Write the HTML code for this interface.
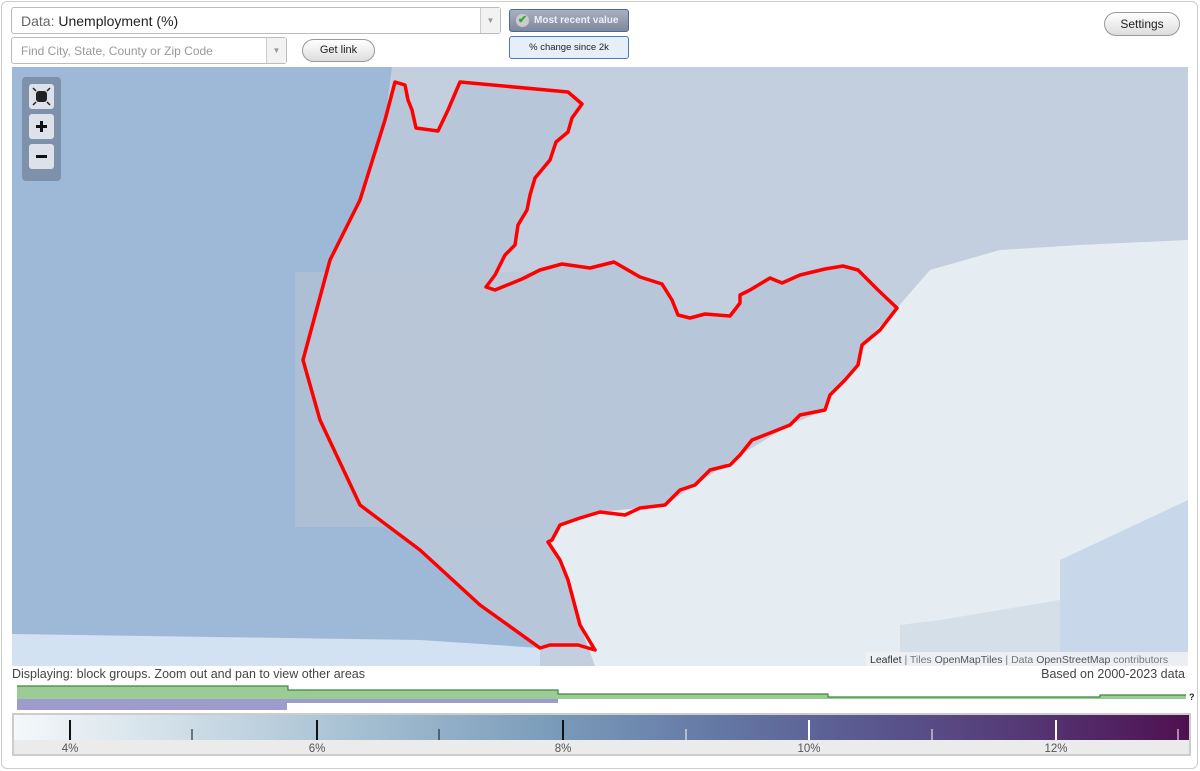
<!DOCTYPE html>
<html><head><meta charset="utf-8"><style>
*{box-sizing:border-box;margin:0;padding:0}
body{width:1200px;height:771px;background:#fff;font-family:"Liberation Sans",sans-serif;position:relative;overflow:hidden}
.frame{position:absolute;left:1px;top:1px;width:1197px;height:768px;border:1px solid #ccc;border-radius:6px}
.abs{position:absolute}
.sel{left:11px;top:7px;width:490px;height:27px;border:1px solid #bbb;border-radius:3px;background:#fff;font-size:14px;color:#666;padding:5px 9px}
.sel .dd,.find .dd{position:absolute;right:0;top:0;width:20px;height:100%;border-left:1px solid #ccc;background:#f2f2f2;color:#999;font-size:8px;text-align:center}
.find{left:11px;top:37px;width:276px;height:27px;border:1px solid #bbb;border-radius:3px;background:#fff;font-size:12px;color:#999;padding:6px 9px}
.btn{border:1px solid #999;border-radius:12px;background:linear-gradient(#fff,#ddd);font-size:11px;color:#222;text-align:center}
</style></head><body>
<div class="frame"></div>
<div class="abs sel">Data: <span style="color:#222">Unemployment (%)</span><div class="dd" style="line-height:26px">▼</div></div>
<div class="abs find">Find City, State, County or Zip Code<div class="dd" style="line-height:26px">▼</div></div>
<div class="abs btn" style="left:302px;top:39px;width:73px;height:23px;line-height:21px">Get link</div>
<div class="abs" style="left:509px;top:9px;width:120px;height:23px;border:1px solid #4a6a9a;border-radius:3px;background:linear-gradient(#a9b0bf,#7e889c);color:#eef;font-size:10px;font-weight:bold;line-height:21px;padding-left:24px">Most recent value
<span style="position:absolute;left:6px;top:4px;width:13px;height:13px;border-radius:7px;background:#ccc;color:#3a3;font-size:11px;line-height:13px;text-align:center">✔</span></div>
<div class="abs" style="left:509px;top:36px;width:120px;height:23px;border:1px solid #4a7ab8;border-radius:3px;background:#e6eef8;color:#222;font-size:9.5px;line-height:21px;text-align:center">% change since 2k</div>
<div class="abs btn" style="left:1104px;top:12px;width:76px;height:24px;line-height:22px;font-size:12px">Settings</div>

<svg class="abs" style="left:12px;top:67px" width="1176" height="599" viewBox="12 67 1176 599">
<rect x="12" y="67" width="1176" height="599" fill="#c3cedf"/>
<path d="M12 67 L392 67 L385 120 L360 200 L330 260 L303 360 L320 420 L360 505 L420 550 L480 605 L540 648 L540 666 L12 666Z" fill="#9eb9d7"/>
<path d="M12 634 L420 640 L540 648 L540 666 L12 666Z" fill="#d3e2f3"/>
<path d="M395 82 L405 85 L408 100 L412 110 L416 128 L438 131 L448 110 L460 82 L568 92 L582 104 L572 118 L568 132 L556 142 L550 160 L535 178 L530 195 L527 210 L518 225 L515 245 L505 255 L495 275 L486 287 L495 290 L522 279 L540 270 L562 264 L590 268 L614 262 L640 277 L662 284 L672 300 L678 315 L690 318 L705 314 L730 316 L740 303 L740 295 L750 290 L770 278 L782 283 L800 275 L825 269 L843 266 L858 270 L878 290 L897 308 L880 330 L862 345 L858 365 L845 380 L830 395 L825 410 L800 415 L790 425 L770 433 L752 440 L740 455 L730 465 L710 470 L695 485 L680 490 L665 505 L640 508 L625 515 L600 512 L580 518 L560 525 L552 540 L548 542 L560 560 L568 580 L580 625 L595 650 L578 645 L550 645 L540 648 L480 605 L420 550 L360 505 L320 420 L303 360 L330 260 L360 200 L385 120Z" fill="#b8c6da"/>
<rect x="295" y="272" width="255" height="255" fill="#bac5d3" opacity=".5"/>
<path d="M897 308 L930 270 L1000 250 L1080 245 L1188 240 L1188 666 L595 666 L580 625 L568 580 L560 560 L548 542 L552 540 L560 525 L600 512 L640 508 L665 505 L695 485 L740 455 L790 425 L825 410 L830 395 L858 365 L862 345Z" fill="#e6edf2"/>
<path d="M1060 560 L1188 500 L1188 666 L1060 666Z" fill="#c8d8ea"/>
<path d="M940 620 L1060 600 L1060 666 L900 666 L900 625Z" fill="#d5dfe8"/>
<path d="M395 82 L405 85 L408 100 L412 110 L416 128 L438 131 L448 110 L460 82 L568 92 L582 104 L572 118 L568 132 L556 142 L550 160 L535 178 L530 195 L527 210 L518 225 L515 245 L505 255 L495 275 L486 287 L495 290 L522 279 L540 270 L562 264 L590 268 L614 262 L640 277 L662 284 L672 300 L678 315 L690 318 L705 314 L730 316 L740 303 L740 295 L750 290 L770 278 L782 283 L800 275 L825 269 L843 266 L858 270 L878 290 L897 308 L880 330 L862 345 L858 365 L845 380 L830 395 L825 410 L800 415 L790 425 L770 433 L752 440 L740 455 L730 465 L710 470 L695 485 L680 490 L665 505 L640 508 L625 515 L600 512 L580 518 L560 525 L552 540 L548 542 L560 560 L568 580 L580 625 L595 650 L578 645 L550 645 L540 648 L480 605 L420 550 L360 505 L320 420 L303 360 L330 260 L360 200 L385 120Z" fill="none" stroke="#f00" stroke-width="3.5" stroke-linejoin="round"/>
<rect x="22" y="77" width="39" height="104" rx="4" fill="#7d91ab"/>
<rect x="29" y="84" width="25" height="25" rx="3" fill="#dde2ea"/>
<rect x="36" y="91" width="11" height="11" rx="3" fill="#222"/>
<path d="M33 88l3 3M50 88l-3 3M33 105l3-3M50 105l-3-3" stroke="#222" stroke-width="1.5"/>
<rect x="29" y="114" width="25" height="25" rx="3" fill="#dde2ea"/>
<path d="M41.5 121v11M36 126.5h11" stroke="#111" stroke-width="3"/>
<rect x="29" y="144" width="25" height="25" rx="3" fill="#dde2ea"/>
<path d="M36 156.5h11" stroke="#111" stroke-width="3"/>
<rect x="866" y="652" width="322" height="14" fill="#eef1f4" opacity=".9"/>
<text x="870" y="663" font-size="10.5" fill="#777" font-family="Liberation Sans"><tspan fill="#333">Leaflet</tspan> | Tiles <tspan fill="#555">OpenMapTiles</tspan> | Data <tspan fill="#555">OpenStreetMap</tspan> contributors</text>
</svg>

<div class="abs" style="left:12px;top:667px;font-size:12.5px;color:#444">Displaying: block groups. Zoom out and pan to view other areas</div>
<div class="abs" style="right:15px;top:667px;font-size:12.5px;color:#444">Based on 2000-2023 data</div>

<svg class="abs" style="left:0;top:680px" width="1200" height="35">
<path d="M17 6 H288 V10 H558 V14 H828 V17 H1100 V15 H1186 V19 H17Z" fill="#9ccc96"/>
<path d="M17 6 H288 V10 H558 V14 H828 V17 H1100 V15 H1186" fill="none" stroke="#3a8a3a" stroke-width="1.2"/>
<path d="M17 19 H558 V23 H287 V30 H17Z" fill="#9e9ccc"/>
<text x="1189" y="20" font-size="9" font-weight="bold" fill="#222">?</text>
</svg>

<div class="abs" style="left:12px;top:713px;width:1179px;height:43px;border:2px solid #ccc;background:#ebebeb">
<div style="position:absolute;left:0;top:0;width:1175px;height:25px;background:linear-gradient(90deg,#f4f8fa 0%,#d5e2ea 12%,#a9c2d4 28%,#7c9dbb 45%,#6478a5 60%,#5a5a90 72%,#553b78 85%,#4f1050 100%)"></div>
<svg style="position:absolute;left:-2px;top:0" width="1179" height="41">
<g stroke="#111" stroke-width="2"><path d="M58 5V25M305 5V25M551 5V25"/></g>
<g stroke="#111" stroke-width="1"><path d="M180 14V25M427 14V25"/></g>
<g stroke="#fff" stroke-width="2"><path d="M797 5V25M1044 5V25"/></g>
<g stroke="#fff" stroke-width="1"><path d="M674 14V25M920 14V25M1166 14V25"/></g>
<g font-size="11.5" fill="#555" text-anchor="middle" font-family="Liberation Sans"><text x="58" y="37">4%</text><text x="305" y="37">6%</text><text x="551" y="37">8%</text><text x="797" y="37">10%</text><text x="1044" y="37">12%</text></g>
</svg>
</div>
</body></html>
